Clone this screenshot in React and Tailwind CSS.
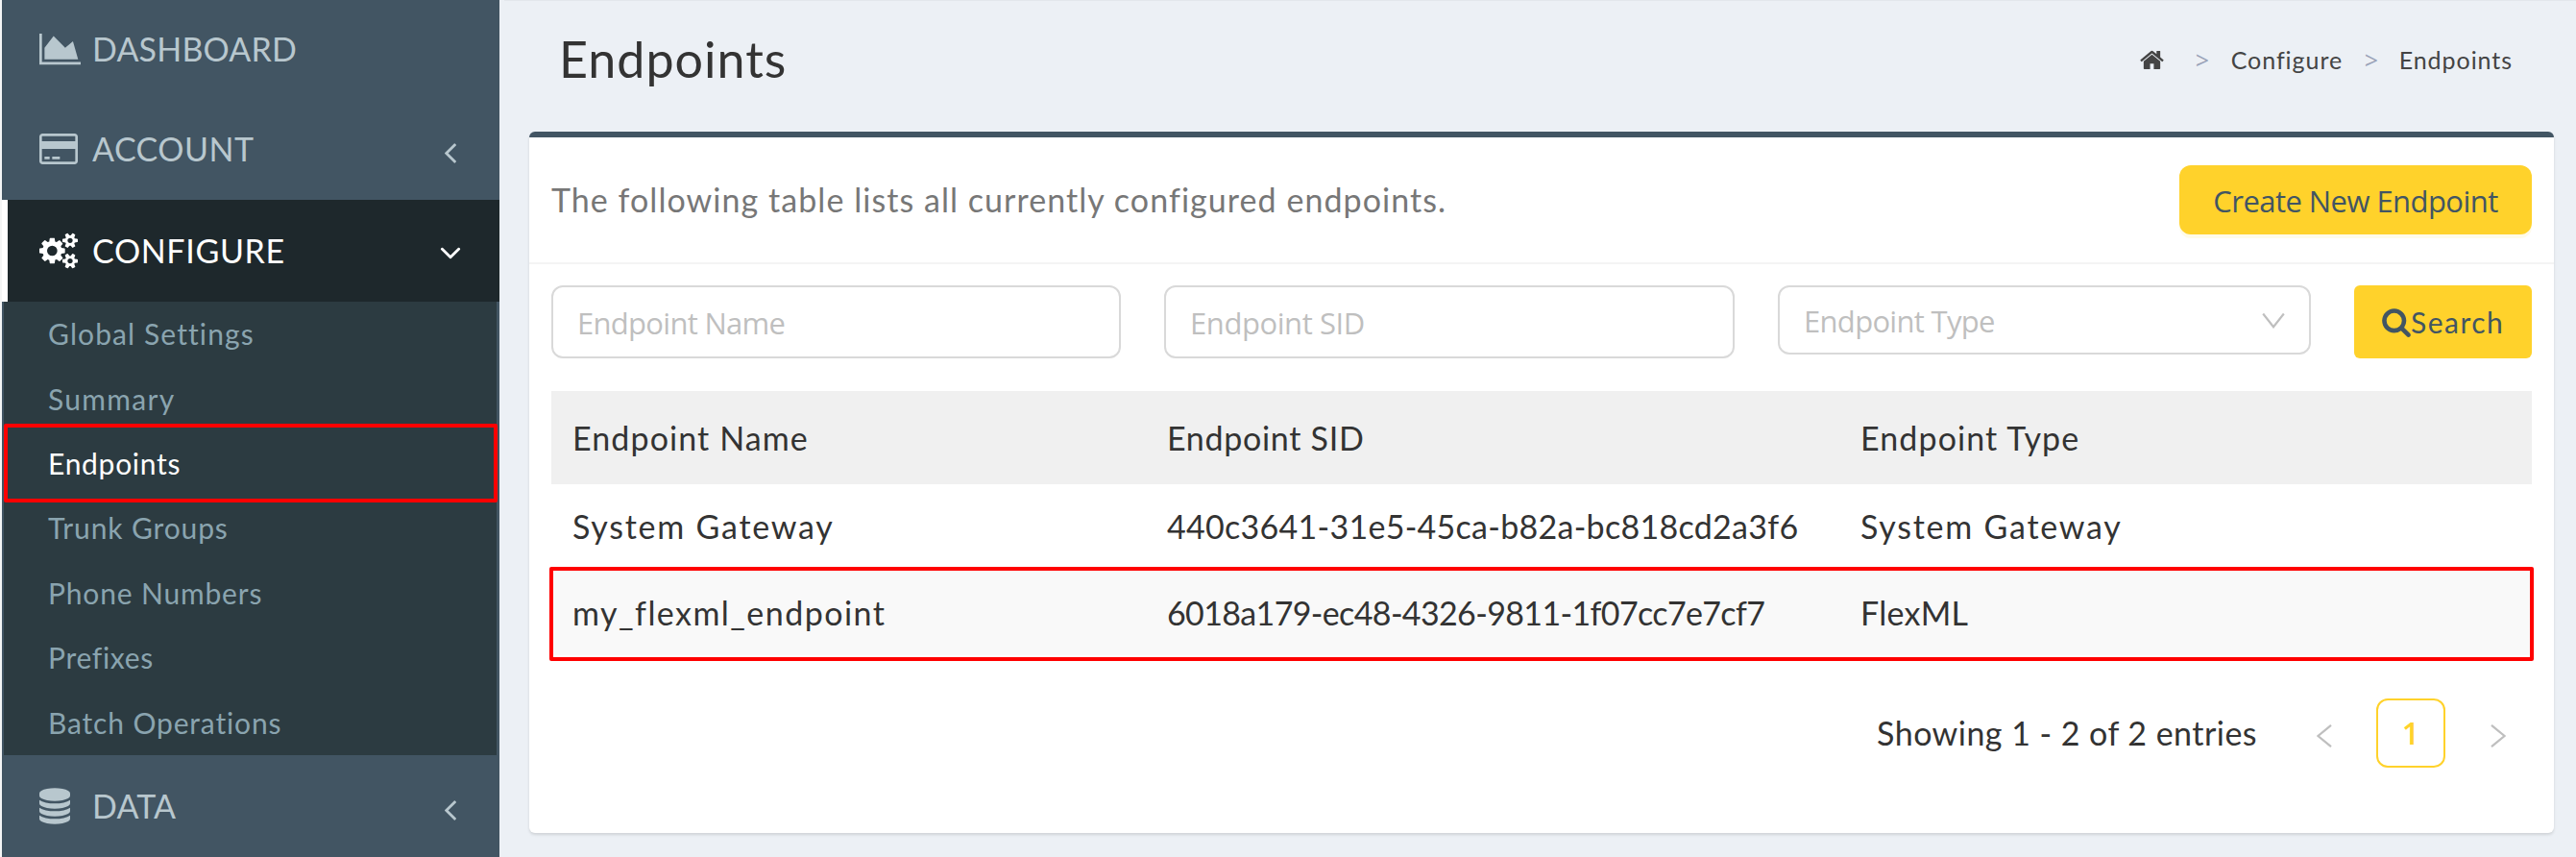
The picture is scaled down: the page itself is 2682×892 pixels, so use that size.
import React from "react";

const paths = {
  area: "M2048 1536v128h-2048v-1536h128v1408h1920zm-384-1024l256 896h-1664v-576l448-576 576 576z",
  card: "M1760 128q66 0 113 47t47 113v1216q0 66-47 113t-113 47h-1600q-66 0-113-47t-47-113v-1216q0-66 47-113t113-47h1600zm-1600 128q-13 0-22.5 9.5t-9.5 22.5v224h1664v-224q0-13-9.5-22.5t-22.5-9.5h-1600zm1600 1280q13 0 22.5-9.5t9.5-22.5v-608h-1664v608q0 13 9.5 22.5t22.5 9.5h1600zm-1504-128v-128h256v128h-256zm384 0v-128h384v128h-384z",
  cogs: "M896 896q0-106-75-181t-181-75-181 75-75 181 75 181 181 75 181-75 75-181zm768 512q0-52-38-90t-90-38-90 38-38 90q0 53 37.5 90.5t90.5 37.5 90.5-37.5 37.5-90.5zm0-1024q0-52-38-90t-90-38-90 38-38 90q0 53 37.5 90.5t90.5 37.5 90.5-37.5 37.5-90.5zm-384 421v185q0 10-7 19.5t-16 10.5l-155 24q-11 35-32 76 34 48 90 115 7 11 7 20 0 12-7 19-23 30-82.5 89.5t-78.5 59.5q-11 0-21-7l-115-90q-37 19-77 31-11 108-23 155-7 24-30 24h-186q-11 0-20-7.5t-10-17.5l-23-153q-34-10-75-31l-118 89q-7 7-20 7-11 0-21-8-144-133-144-160 0-9 7-19 10-14 41-53t47-61q-23-44-35-82l-152-24q-10-1-17-9.5t-7-19.5v-185q0-10 7-19.5t16-10.5l155-24q11-35 32-76-34-48-90-115-7-11-7-20 0-12 7-20 22-30 82-89t79-59q11 0 21 7l115 90q34-18 77-32 11-108 23-154 7-24 30-24h186q11 0 20 7.5t10 17.5l23 153q34 10 75 31l118-89q8-7 20-7 11 0 21 8 144 133 144 160 0 8-7 19-12 16-42 54t-45 60q23 48 34 82l152 23q10 2 17 10.5t7 19.5zm640 533v140q0 16-149 31-12 27-30 52 51 113 51 138 0 4-4 7-122 71-124 71-8 0-46-47t-52-68q-20 2-30 2t-30-2q-14 21-52 68t-46 47q-2 0-124-71-4-3-4-7 0-25 51-138-18-25-30-52-149-15-149-31v-140q0-16 149-31 13-29 30-52-51-113-51-138 0-4 4-7 4-2 35-20t59-34 30-16q8 0 46 46.5t52 67.5q20-2 30-2t30 2q51-71 92-112l6-2q4 0 124 70 4 3 4 7 0 25-51 138 17 23 30 52 149 15 149 31zm0-1024v140q0 16-149 31-12 27-30 52 51 113 51 138 0 4-4 7-122 71-124 71-8 0-46-47t-52-68q-20 2-30 2t-30-2q-14 21-52 68t-46 47q-2 0-124-71-4-3-4-7 0-25 51-138-18-25-30-52-149-15-149-31v-140q0-16 149-31 13-29 30-52-51-113-51-138 0-4 4-7 4-2 35-20t59-34 30-16q8 0 46 46.5t52 67.5q20-2 30-2t30 2q51-71 92-112l6-2q4 0 124 70 4 3 4 7 0 25-51 138 17 23 30 52 149 15 149 31z",
  database:
    "M768 768q237 0 443-43t325-127v170q0 69-103 128t-280 93.5-385 34.5-385-34.5-280-93.5-103-128v-170q119 84 325 127t443 43zm0 768q237 0 443-43t325-127v170q0 69-103 128t-280 93.5-385 34.5-385-34.5-280-93.5-103-128v-170q119 84 325 127t443 43zm0-384q237 0 443-43t325-127v170q0 69-103 128t-280 93.5-385 34.5-385-34.5-280-93.5-103-128v-170q119 84 325 127t443 43zm0-1152q208 0 385 34.5t280 93.5 103 128v128q0 69-103 128t-280 93.5-385 34.5-385-34.5-280-93.5-103-128v-128q0-69 103-128t280-93.5 385-34.5z",
  home: "M1408 992v480q0 26-19 45t-45 19h-384v-384h-256v384h-384q-26 0-45-19t-19-45v-480q0-1 .5-3t.5-3l575-474 575 474q1 2 1 6zm223-69l-62 74q-8 9-21 11h-3q-13 0-21-7l-692-577-692 577q-12 8-24 7-13-2-21-11l-62-74q-8-10-7-23.5t11-21.5l719-599q32-26 76-26t76 26l244 204v-195q0-14 9-23t23-9h192q14 0 23 9t9 23v408l219 182q10 8 11 21.5t-7 23.5z",
  search:
    "M1152 832q0-185-131.5-316.5t-316.5-131.5-316.5 131.5-131.5 316.5 131.5 316.5 316.5 131.5 316.5-131.5 131.5-316.5zm512 832q0 52-38 90t-90 38q-54 0-90-38l-343-342q-179 124-399 124-143 0-273.5-55.5t-225-150-150-225-55.5-273.5 55.5-273.5 150-225 225-150 273.5-55.5 273.5 55.5 225 150 150 225 55.5 273.5q0 220-124 399l343 343q37 37 37 90z",
  angle:
    "M627 544q0 13-10 23l-393 393 393 393q10 10 10 23t-10 23l-50 50q-10 10-23 10t-23-10l-466-466q-10-10-10-23t10-23l466-466q10-10 23-10t23 10l50 50q10 10 10 23z",
};

const menu = [
  { label: "DASHBOARD", icon: "area", box: "0 0 2048 1792", size: "w-[43px]", row: "h-[102px]", track: "tracking-[0.2px]" },
  { label: "ACCOUNT", icon: "card", box: "0 0 1920 1792", size: "w-[40px]", row: "h-[106px]", track: "tracking-[0.5px]", arrow: true },
];

const subMenu = [
  { label: "Global Settings", track: "tracking-[1.1px]" },
  { label: "Summary", track: "tracking-[1.3px]" },
  { label: "Endpoints", track: "tracking-[0.72px]", active: true },
  { label: "Trunk Groups", track: "tracking-[0.87px]" },
  { label: "Phone Numbers", track: "tracking-[0.83px]" },
  { label: "Prefixes", track: "tracking-[0.68px]" },
  { label: "Batch Operations", track: "tracking-[0.85px]" },
];

const endpoints = [
  {
    name: "System Gateway",
    nameTrack: "tracking-[1.75px]",
    sid: "440c3641-31e5-45ca-b82a-bc818cd2a3f6",
    sidTrack: "tracking-[0.28px]",
    type: "System Gateway",
    typeTrack: "tracking-[1.75px]",
  },
  {
    name: "my_flexml_endpoint",
    nameTrack: "tracking-[1.45px]",
    sid: "6018a179-ec48-4326-9811-1f07cc7e7cf7",
    sidTrack: "tracking-[-0.64px]",
    type: "FlexML",
    typeTrack: "tracking-[0.3px]",
    marked: true,
  },
];

const Icon = ({ name, box, className }) => (
  <svg viewBox={box} className={className} fill="currentColor">
    <path d={paths[name]} />
  </svg>
);

const MenuRow = ({ item }) => (
  <div className={`flex items-center pl-[39px] pr-[45px] text-[34px] leading-none text-[#b8c7ce] ${item.row}`}>
    <div className="w-[55px]">
      <Icon name={item.icon} box={item.box} className={`h-[38px] ${item.size}`} />
    </div>
    <span className={item.track}>{item.label}</span>
    {item.arrow && <Icon name="angle" box="45 461 582 998" className="mt-2 ml-auto h-[21px] w-3" />}
  </div>
);

const Sidebar = () => (
  <aside className="ml-0.5 flex w-[518px] shrink-0 flex-col bg-[#425563]">
    {menu.map((item) => (
      <MenuRow key={item.label} item={item} />
    ))}
    <div className="flex h-[106px] items-center border-l-6 border-white bg-[#1e282c] pr-[40px] pl-[33px] text-[34px] leading-none text-white">
      <div className="w-[55px]">
        <Icon name="cogs" box="0 0 1920 1792" className="h-[38px] w-[40px]" />
      </div>
      <span className="tracking-[0.65px]">CONFIGURE</span>
      <Icon name="angle" box="45 461 582 998" className="mt-1 mr-[5px] ml-auto h-[21px] w-3 -rotate-90" />
    </div>
    <ul className="mr-[3px] ml-0.5 flex h-[472px] flex-col bg-[#2c3b41]">
      {subMenu.map((item) => (
        <li
          key={item.label}
          className={`relative flex flex-1 items-center pb-px pl-[46px] text-[30px] leading-none ${
            item.active ? "text-white" : "text-[#8aa4af]"
          }`}
        >
          <span className={item.track}>{item.label}</span>
          {item.active && (
            <div className="absolute -top-2 -right-px left-0 h-[82px] rounded-xs border-4 border-[#ff0000]"></div>
          )}
        </li>
      ))}
    </ul>
    <MenuRow
      item={{ label: "DATA", icon: "database", box: "0 0 1536 1792", size: "w-[32px]", row: "h-[106px]", track: "tracking-[0.2px]", arrow: true }}
    />
  </aside>
);

const Header = () => (
  <header className="flex h-[137px] justify-between border-t border-[#e3e7ec] pr-[66px] pl-[57px]">
    <h1 className="mt-[35px] text-[52px] leading-[50px] tracking-[1px] text-[#333]">Endpoints</h1>
    <div className="mt-[48px] flex h-[26px] items-center text-[25px] leading-none text-[#444]">
      <Icon name="home" box="0 0 1664 1792" className="mr-[33px] h-[27px] w-[25px]" />
      <span className="w-[37px] font-['Open_Sans',sans-serif] text-[25px] text-[#9aa3b8]">&gt;</span>
      <span className="w-[139px] tracking-[0.95px]">Configure</span>
      <span className="w-[36px] font-['Open_Sans',sans-serif] text-[25px] text-[#9aa3b8]">&gt;</span>
      <span className="tracking-[0.95px]">Endpoints</span>
    </div>
  </header>
);

const Filters = () => (
  <div className="flex h-[132px] items-start px-[23px] pt-[22px] font-['Open_Sans',sans-serif] text-[31px] text-[#bfbfbf]">
    <div className="mr-[45px] flex h-[76px] w-[593px] items-center rounded-xl border-2 border-[#d9d9d9] pt-[3px] pl-[25px]">
      <span className="tracking-[-0.7px]">Endpoint Name</span>
    </div>
    <div className="mr-[45px] flex h-[76px] w-[594px] items-center rounded-xl border-2 border-[#d9d9d9] pt-[3px] pl-[25px]">
      <span className="tracking-[-0.42px]">Endpoint SID</span>
    </div>
    <div className="mr-[45px] flex h-[72px] w-[555px] items-center justify-between rounded-xl border-2 border-[#d9d9d9] pt-[3px] pr-[25px] pl-[25px]">
      <span className="tracking-[-0.69px]">Endpoint Type</span>
      <svg viewBox="0 0 24 16" className="-mt-0.5 h-4 w-6" fill="none" stroke="currentColor" strokeWidth="2.2">
        <path d="M1.2 0.5 12 14.3 22.8 0.5" />
      </svg>
    </div>
    <button className="flex h-[76px] w-[185px] items-center rounded-md bg-[#ffd22b] pl-[29px] font-['Lato',sans-serif] text-[30px] text-[#425563]">
      <Icon name="search" box="0 0 1664 1792" className="h-[32px] w-[30px]" />
      <span className="tracking-[1.5px]">Search</span>
    </button>
  </div>
);

const EndpointTable = () => (
  <div className="ml-[23px] w-[2062px] text-[34px] leading-none text-[#333]">
    <div className="grid h-[97px] grid-cols-[619px_722px_1fr] items-center bg-[#f0f0f0] pl-[22px]">
      <span className="tracking-[1.1px]">Endpoint Name</span>
      <span className="tracking-[0.7px]">Endpoint SID</span>
      <span className="tracking-[1.1px]">Endpoint Type</span>
    </div>
    {endpoints.map((ep) => (
      <div
        key={ep.sid}
        className={`relative grid grid-cols-[619px_722px_1fr] items-center pl-[22px] ${
          ep.marked ? "h-[90px] bg-[#f9f9f9] pt-0.5" : "h-[88px]"
        }`}
      >
        <span className={ep.nameTrack}>{ep.name}</span>
        <span className={ep.sidTrack}>{ep.sid}</span>
        <span className={ep.typeTrack}>{ep.type}</span>
        {ep.marked && (
          <div className="absolute -top-0.5 -right-0.5 -left-0.5 h-[98px] rounded-xs border-4 border-[#ff0000]"></div>
        )}
      </div>
    ))}
  </div>
);

const Pagination = () => (
  <div className="mt-[45px] mr-[50px] flex h-[72px] items-center justify-end text-[34px] leading-none text-[#333]">
    <span className="mr-[62px] tracking-[0.46px]">Showing 1 - 2 of 2 entries</span>
    <svg viewBox="0 0 16 24" className="mt-1.5 mr-[46px] h-6 w-4" fill="none" stroke="#bfbfbf" strokeWidth="2.2">
      <path d="M15 0.8 1.5 12 15 23.2" />
    </svg>
    <div className="mr-[47px] flex h-[72px] w-[72px] items-center justify-center rounded-xl border-2 border-[#ffd22b] font-['Open_Sans',sans-serif] text-[32px] font-semibold text-[#ffd22b]">
      1
    </div>
    <svg viewBox="0 0 16 24" className="mt-1.5 h-6 w-4" fill="none" stroke="#bfbfbf" strokeWidth="2.2">
      <path d="M1 0.8 14.5 12 1 23.2" />
    </svg>
  </div>
);

const App = () => {
  return (
    <div className="flex h-[892px] w-[2682px] overflow-hidden bg-[#f4f5f5] font-['Lato',sans-serif]">
      <Sidebar />
      <main className="flex-1 bg-[#ecf0f5]">
        <div className="pl-[5px]">
          <Header />
        </div>
        <section className="ml-[31px] h-[730px] w-[2108px] rounded-md border-t-6 border-[#425563] bg-white shadow-[0_2px_3px_rgba(0,0,0,0.12)]">
          <div className="flex h-[132px] items-center justify-between border-b-2 border-[#f4f4f4] px-[23px]">
            <p className="pb-0.5 text-[34px] tracking-[1.05px] text-[#777]">
              The following table lists all currently configured endpoints.
            </p>
            <button className="h-[72px] w-[367px] rounded-xl bg-[#ffd22b] pt-0.5 font-['Open_Sans',sans-serif] text-[31px] tracking-[-0.55px] text-[#425563] shadow-[0_4px_0_rgba(255,251,230,0.9)]">
              Create New Endpoint
            </button>
          </div>
          <Filters />
          <EndpointTable />
          <Pagination />
        </section>
      </main>
    </div>
  );
};

export default App;
